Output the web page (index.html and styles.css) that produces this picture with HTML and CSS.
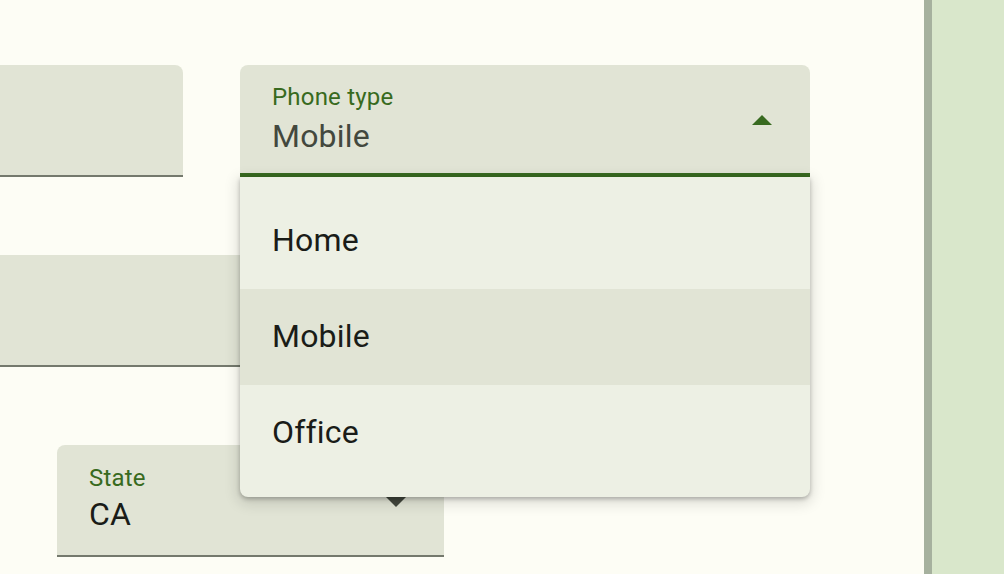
FILE: index.html
```html
<!DOCTYPE html>
<html lang="en">
<head>
<meta charset="utf-8">
<title>Phone type</title>
<link rel="stylesheet" href="styles.css">
</head>
<body>
<div class="page">
  <main class="form">
    <div class="row row-1">
      <div class="field field-a"></div>
      <div class="select-wrap">
        <div class="field field-phone focused">
          <div class="field-text">
            <span class="label">Phone type</span>
            <span class="value muted">Mobile</span>
          </div>
          <span class="arrow up"></span>
        </div>
        <ul class="menu">
          <li class="item">Home</li>
          <li class="item selected">Mobile</li>
          <li class="item">Office</li>
        </ul>
      </div>
    </div>
    <div class="row row-2">
      <div class="field field-b"></div>
    </div>
    <div class="row row-3">
      <div class="field field-state">
        <div class="field-text">
          <span class="label">State</span>
          <span class="value">CA</span>
        </div>
        <span class="arrow down"></span>
      </div>
    </div>
  </main>
  <aside class="side"></aside>
</div>
</body>
</html>
```

FILE: styles.css
```css
* { box-sizing: border-box; }
html, body {
  margin: 0;
  height: 100%;
}
body {
  background: #fdfdf5;
  font-family: Roboto, "Noto Sans", "Liberation Sans", sans-serif;
  overflow: hidden;
}
.page {
  display: flex;
  height: 574px;
}
.form {
  width: 924px;
  flex: none;
  padding-top: 65px;
  display: flex;
  flex-direction: column;
  gap: 78px;
}
.side {
  flex: 1;
  background: #d9e7cb;
  border-left: 8px solid #a6b19e;
}
.row {
  display: flex;
  align-items: flex-start;
}
.row-1 { gap: 57px; }
.field {
  height: 112px;
  background: #e1e4d5;
  border-radius: 8px 8px 0 0;
  border-bottom: 2px solid #74796d;
  display: flex;
  align-items: flex-start;
  padding: 16px 32px 0 32px;
  position: relative;
}
.field.focused {
  border-bottom: 4px solid #386a20;
}
.field-a {
  width: 283px;
  margin-left: -100px;
}
.field-b {
  width: 360px;
  margin-left: -100px;
}
.field-state {
  width: 387px;
  margin-left: 57px;
  padding-top: 17px;
}
.select-wrap {
  position: relative;
  width: 570px;
}
.field-phone {
  width: 570px;
}
.field-text {
  display: flex;
  flex-direction: column;
  flex: 1;
}
.label {
  font-size: 24px;
  line-height: 32px;
  color: #386a20;
  letter-spacing: 0.2px;
}
.value {
  font-size: 32px;
  line-height: 46px;
  color: #1a1c18;
  letter-spacing: 0.2px;
}
.field-state .value {
  line-height: 40px;
}
.value.muted { color: #43483e; }
.arrow {
  position: absolute;
  right: 38px;
  width: 0;
  height: 0;
  border-left: 10px solid transparent;
  border-right: 10px solid transparent;
}
.arrow.up {
  top: 50px;
  border-bottom: 10px solid #386a20;
}
.arrow.down {
  top: 52px;
  border-top: 10px solid #43483e;
}
.menu {
  position: absolute;
  left: 0;
  top: 112px;
  width: 570px;
  margin: 0;
  padding: 16px 0;
  list-style: none;
  background: #edf0e4;
  border-radius: 0 0 8px 8px;
  box-shadow: 0 2px 4px rgba(0, 0, 0, 0.25), 0 4px 14px 3px rgba(0, 0, 0, 0.12);
  z-index: 10;
}
.item {
  height: 96px;
  display: flex;
  align-items: center;
  padding: 0 32px 2px 32px;
  font-size: 32px;
  line-height: 48px;
  color: #1a1c18;
  letter-spacing: 0.2px;
}
.item.selected {
  background: #e1e4d5;
}
```
